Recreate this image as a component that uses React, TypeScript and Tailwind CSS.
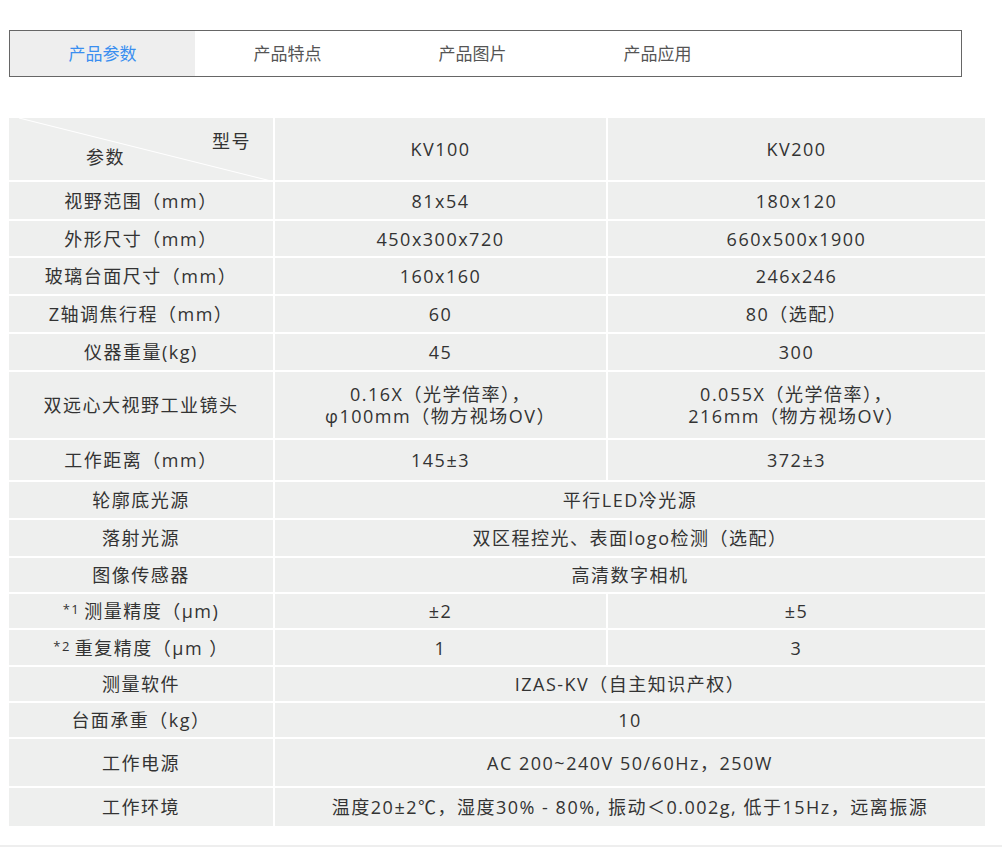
export default function App() {
  const F = { fontFamily: '"Open Sans", "Noto Sans CJK SC", "Noto Sans", sans-serif' };
  const td = "border-2 border-white bg-[#eeefee] text-center align-middle p-0 leading-[22px] tracking-[1.5px] whitespace-nowrap";
  type R = [React.ReactNode, string, string | null, number];
  const rows: R[] = [
    ["视野范围（mm）", "81x54", "180x120", 39],
    ["外形尺寸（mm）", "450x300x720", "660x500x1900", 37],
    ["玻璃台面尺寸（mm）", "160x160", "246x246", 38],
    ["Z轴调焦行程（mm）", "60", "80（选配）", 38],
    ["仪器重量(kg)", "45", "300", 38],
    ["双远心大视野工业镜头", "0.16X（光学倍率），\nφ100mm（物方视场OV）", "0.055X（光学倍率），\n216mm（物方视场OV）", 68],
    ["工作距离（mm）", "145±3", "372±3", 42],
    ["轮廓底光源", "平行LED冷光源", null, 38],
    ["落射光源", "双区程控光、表面logo检测（选配）", null, 38],
    ["图像传感器", "高清数字相机", null, 36],
    [<><sup className="text-[13px] mr-1 relative -top-[4px]">*1</sup>测量精度（μm)</>, "±2", "±5", 36],
    [<><sup className="text-[13px] mr-1 relative -top-[4px]">*2</sup>重复精度（μm ）</>, "1", "3", 37],
    ["测量软件", "IZAS-KV（自主知识产权）", null, 36],
    ["台面承重（kg）", "10", null, 36],
    ["工作电源", "AC 200~240V 50/60Hz，250W", null, 49],
    ["工作环境", "温度20±2℃，湿度30% - 80%, 振动＜0.002g, 低于15Hz，远离振源", null, 40],
  ];
  return (
    <div className="w-[1002px] h-[847px] bg-white text-[#333] text-[18px] relative" style={F}>
      <div className="pt-[30px] pl-[9px]">
        <div className="w-[953px] h-[47px] border border-[#666] flex text-[17px]">
          <div className="w-[185px] bg-[#eeeeee] text-[#3a8ef0] flex items-center justify-center">产品参数</div>
          {["产品特点", "产品图片", "产品应用"].map(t => (
            <div key={t} className="w-[185px] flex items-center justify-center text-[#555]">{t}</div>
          ))}
        </div>
      </div>
      <div className="pt-[39px] pl-[7px]">
        <table className="border-collapse w-[980px]" style={{ tableLayout: "fixed" }}>
          <colgroup><col className="w-[266px]" /><col className="w-[333px]" /><col /></colgroup>
          <tbody>
            <tr className="h-[64px]">
              <td className={td + " relative"}>
                <svg className="absolute inset-0" width="266" height="64"><line x1="10" y1="0" x2="266" y2="64" stroke="white" strokeWidth="1" /></svg>
                <span className="absolute left-[203px] top-[12px]">型号</span>
                <span className="absolute left-[77px] top-[28px]">参数</span>
              </td>
              <td className={td}>KV100</td>
              <td className={td}>KV200</td>
            </tr>
            {rows.map((r, i) => (
              <tr key={i} style={{ height: r[3] }}>
                <td className={td}>{r[0]}</td>
                {r[2] === null ? (
                  <td className={td} colSpan={2}>{r[1]}</td>
                ) : (
                  <>
                    <td className={td + " whitespace-pre-line"}>{r[1]}</td>
                    <td className={td + " whitespace-pre-line"}>{r[2]}</td>
                  </>
                )}
              </tr>
            ))}
          </tbody>
        </table>
      </div>
      <div className="absolute left-0 right-0 top-[845px] h-[2px] bg-[#eee]" />
    </div>
  );
}
